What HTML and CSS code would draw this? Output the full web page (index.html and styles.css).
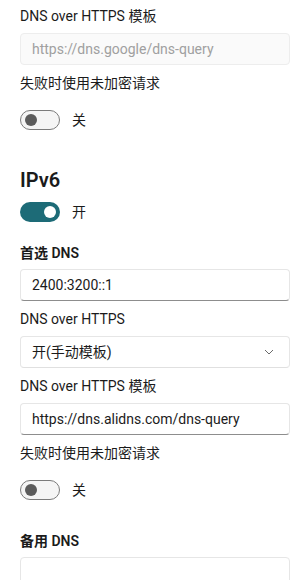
FILE: index.html
```html
<!DOCTYPE html>
<html lang="zh-CN">
<head>
<meta charset="utf-8">
<link rel="stylesheet" href="styles.css">
</head>
<body>
<div class="page">
  <div class="label first">DNS over HTTPS 模板</div>
  <div class="input disabled">https://dns.google/dns-query</div>
  <div class="label">失败时使用未加密请求</div>
  <div class="toggle-row">
    <span class="toggle off"><span class="knob"></span></span>
    <span class="toggle-text">关</span>
  </div>

  <div class="heading">IPv6</div>
  <div class="toggle-row tight">
    <span class="toggle on"><span class="knob"></span></span>
    <span class="toggle-text">开</span>
  </div>

  <div class="label bold after-toggle">首选 DNS</div>
  <div class="input near">2400:3200::1</div>
  <div class="label">DNS over HTTPS</div>
  <div class="input select">
    <span>开(手动模板)</span>
    <svg class="chev" width="10" height="6" viewBox="0 0 10 6"><path d="M1 1 L5 5 L9 1" fill="none" stroke="#6b6b6b" stroke-width="1"/></svg>
  </div>
  <div class="label">DNS over HTTPS 模板</div>
  <div class="input">https://dns.alidns.com/dns-query</div>
  <div class="label">失败时使用未加密请求</div>
  <div class="toggle-row">
    <span class="toggle off"><span class="knob"></span></span>
    <span class="toggle-text">关</span>
  </div>

  <div class="label bold section">备用 DNS</div>
  <div class="input near last"></div>
</div>
</body>
</html>
```
FILE: styles.css
```css
html, body {
  margin: 0;
  padding: 0;
  background: #ffffff;
}
body {
  font-family: "Roboto", "Noto Sans CJK SC", sans-serif;
  font-size: 14px;
  color: #1b1b1b;
}
.page {
  display: flex;
  flex-direction: column;
  padding: 0 17px 0 20px;
}
.label {
  line-height: 20px;
  height: 20px;
  margin-top: 8px;
  flex-shrink: 0;
}
.label.first {
  margin-top: 6px;
}
.label.bold {
  font-weight: 600;
}
.label.after-toggle {
  margin-top: 21px;
}
.label.section {
  margin-top: 31px;
}
.input {
  box-sizing: border-box;
  height: 32px;
  margin-top: 7px;
  border: 1px solid #e6e6e6;
  border-bottom-color: #8d8d8d;
  border-radius: 4px;
  background: #ffffff;
  padding: 0 11px;
  display: flex;
  align-items: center;
  line-height: 20px;
  flex-shrink: 0;
}
.input.near {
  margin-top: 6px;
}
.input.last {
  border-bottom-color: #e6e6e6;
}
.input.disabled {
  background: #fafafa;
  border-color: #ededed;
  color: #a0a0a0;
}
.input.select {
  justify-content: space-between;
  border-bottom-color: #e0e0e0;
  padding-right: 15px;
}
.chev {
  display: block;
}
.toggle-row {
  display: flex;
  align-items: center;
  gap: 12px;
  margin-top: 17px;
  height: 20px;
  flex-shrink: 0;
}
.toggle-row.tight {
  margin-top: 8px;
}
.toggle {
  box-sizing: border-box;
  width: 40px;
  height: 20px;
  border-radius: 10px;
  display: flex;
  align-items: center;
  padding: 0 4px;
}
.toggle.off {
  border: 1px solid #7b7b7b;
  background: #f5f5f5;
  justify-content: flex-start;
  padding-left: 4px;
}
.toggle.off .knob {
  width: 12px;
  height: 12px;
  border-radius: 50%;
  background: #5c5c5c;
}
.toggle.on {
  background: #1d6b77;
  justify-content: flex-end;
  padding-right: 4px;
}
.toggle.on .knob {
  width: 12px;
  height: 12px;
  border-radius: 50%;
  background: #ffffff;
}
.toggle-text {
  line-height: 20px;
}
.heading {
  font-size: 20px;
  font-weight: 600;
  line-height: 28px;
  margin-top: 36px;
  flex-shrink: 0;
}
```
